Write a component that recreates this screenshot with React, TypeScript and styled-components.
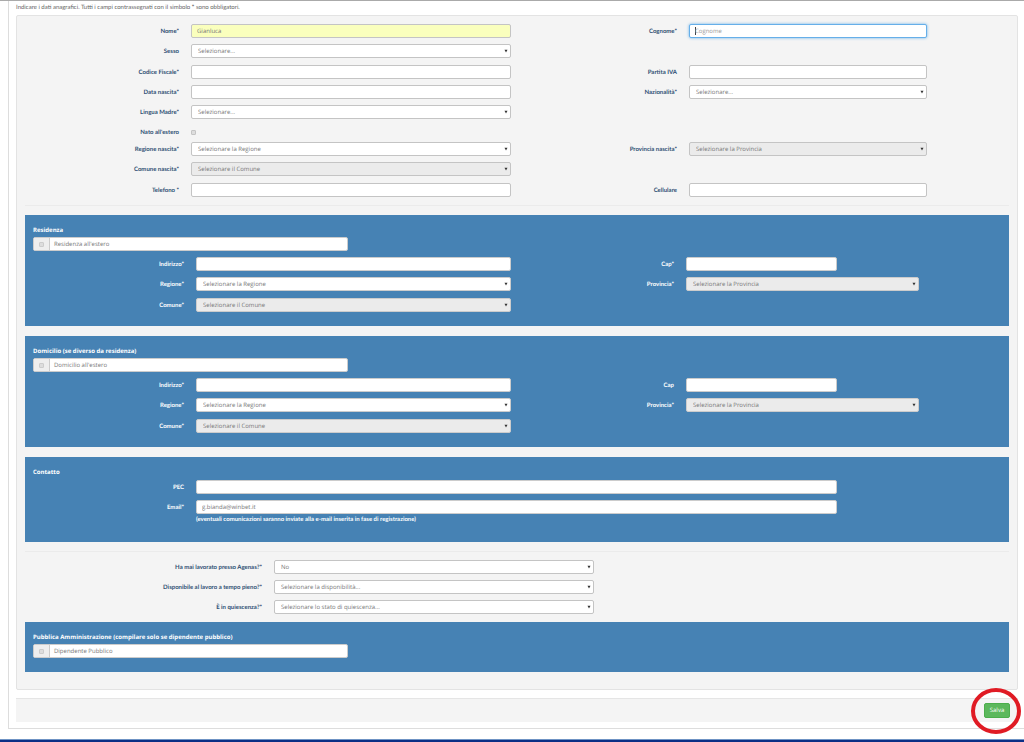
import React from "react";
import styled, { createGlobalStyle, css } from "styled-components";

const GlobalStyle = createGlobalStyle`
  *, *::before, *::after { box-sizing: border-box; }
  body {
    margin: 0;
    background: #fff;
    color: #777;
    font-family: "Open Sans", "Liberation Sans", sans-serif;
    font-size: 6px;
    line-height: 14px;
    text-rendering: geometricPrecision;
  }
  input, select, button { font: inherit; margin: 0; text-rendering: inherit; }
`;

const Page = styled.div`
  border-top: 1px solid #aaa;
`;

const Frame = styled.main`
  margin-left: 8px;
  padding: 0 6px 6px 7px;
  border-left: 1px solid #ddd;
  border-bottom: 1px solid #ddd;
`;

const Intro = styled.p`
  margin: 0;
  font-family: Lato, "Open Sans", sans-serif;
  line-height: 14px;
  color: #666;
`;

const Panel = styled.div`
  padding: 8px 8px 17px;
  border: 1px solid #e3e3e3;
  border-radius: 2px;
  background: #f4f4f4;
`;

const Divider = styled.hr<{ $above: number; $below: number }>`
  height: 1px;
  margin: ${(p) => p.$above}px 0 ${(p) => p.$below}px;
  border: 0;
  background: #ebebeb;
`;

const Rows = styled.div<{ $top?: number }>`
  display: flex;
  flex-direction: column;
  gap: 6px;
  margin-top: ${(p) => p.$top ?? 0}px;
`;

const Row = styled.div`
  display: grid;
  column-gap: 12px;
  align-items: center;
  grid-template-columns: 154fr 320fr 154fr 238fr 70fr;
`;

const CheckRow = styled(Row)`
  height: 11px;
`;

const SectionRow = styled(Row)`
  grid-template-columns: 151fr 315fr 151fr 151fr 70fr 70fr;
`;

const WorkRow = styled(Row)`
  grid-template-columns: 237fr 320fr 403fr;
`;

const Label = styled.label`
  min-width: 0;
  padding-top: 2px;
  text-align: right;
  white-space: nowrap;
  font-family: Lato, "Open Sans", sans-serif;
  font-weight: 700;
  line-height: 12px;
  color: #2f4f73;
`;

const control = css`
  display: block;
  width: 100%;
  min-width: 0;
  height: 14px;
  border: 1px solid #c4c4c4;
  border-radius: 2px;
  background: #fff;
  color: #777;
  line-height: 12px;
  outline: 0;
`;

const TextInput = styled.input<{ $filled?: boolean; $span?: number }>`
  ${control}
  padding: 0 5px;
  grid-column: span ${(p) => p.$span ?? 1};
  ${(p) => p.$filled && css`background: #faffbd;`}
  &::placeholder { color: #999; opacity: 1; }
  &:focus {
    border-color: #66afe9;
    box-shadow: 0 0 3px #66afe9;
  }
  &:focus:placeholder-shown {
    background: linear-gradient(#444, #444) 5px 2px / 1px 8px no-repeat #fff;
  }
`;

const SelectBox = styled.div<{ $span?: number }>`
  position: relative;
  min-width: 0;
  grid-column: span ${(p) => p.$span ?? 1};
`;

const NativeSelect = styled.select`
  ${control}
  appearance: none;
  padding: 0 10px 0 6px;
  &:disabled { background: #ebebeb; opacity: 1; }
`;

const Arrow = styled.svg`
  position: absolute;
  top: 5px;
  right: 3px;
  width: 4px;
  height: 4px;
  pointer-events: none;
`;

const Check = styled.input`
  appearance: none;
  display: block;
  width: 5px;
  height: 5px;
  border: 1px solid #c4c4c4;
  border-radius: 1px;
  background: #ddd;
  &:checked { background: #4682b4; }
`;

const Section = styled.section`
  padding: 8px 8px 14px;
  background: #4682b4;
  & + & { margin-top: 10px; }
  ${Label} { color: #fff; }
  input, select { border-color: #ccc; }
`;

const SectionTitle = styled.h2`
  margin: 0;
  font-size: 6px;
  line-height: 14px;
  font-weight: 700;
  color: #fff;
`;

const CheckGroup = styled.div`
  display: flex;
  width: 32.5%;
  height: 14px;
  border: 1px solid #ccc;
  border-radius: 2px;
  background: #fff;
`;

const CheckAddon = styled.span`
  display: flex;
  align-items: center;
  justify-content: center;
  width: 16px;
  border-right: 1px solid #ccc;
  background: #eee;
`;

const CheckText = styled.label`
  flex: 1;
  padding-left: 4px;
  line-height: 12px;
`;

const Note = styled.p`
  grid-column: 2 / span 3;
  margin: 0 0 2px;
  font-family: Lato, "Open Sans", sans-serif;
  line-height: 12px;
  font-weight: 700;
  color: #fff;
`;

const SpacedSection = styled(Section)`
  margin-top: 8px;
`;

const Footer = styled.footer`
  display: flex;
  justify-content: flex-end;
  align-items: flex-start;
  height: 24px;
  margin-top: 8px;
  padding: 4px 8px 0;
  border-top: 1px solid #e5e5e5;
  background: #f4f4f4;
`;

const SaveWrap = styled.div`
  position: relative;
`;

const SaveButton = styled.button`
  display: block;
  width: 26px;
  height: 15px;
  padding: 0;
  border: 1px solid #4cae4c;
  border-radius: 2px;
  background: #5cb85c;
  color: #fff;
  line-height: 13px;
`;

const Ring = styled.svg`
  position: absolute;
  top: -16px;
  left: -14px;
  width: 52px;
  height: 48px;
  pointer-events: none;
`;

const BottomBand = styled.div`
  height: 3px;
  margin-top: 10px;
  border-top: 1px solid #6f93c4;
  background: #0b2f86;
`;

type SelectProps = { id: string; text: string; disabled?: boolean; span?: number };

function Select({ id, text, disabled, span }: SelectProps) {
  return (
    <SelectBox $span={span}>
      <NativeSelect id={id} disabled={disabled}>
        <option>{text}</option>
      </NativeSelect>
      <Arrow viewBox="0 0 4 4" aria-hidden="true">
        <path d="M0.5 0.7h3L2 3.4z" fill="#333" />
      </Arrow>
    </SelectBox>
  );
}

function CheckLine({ id, text }: { id: string; text: string }) {
  return (
    <CheckGroup>
      <CheckAddon>
        <Check type="checkbox" id={id} />
      </CheckAddon>
      <CheckText htmlFor={id}>{text}</CheckText>
    </CheckGroup>
  );
}

type AddressProps = { prefix: string; title: string; abroad: string; cap: string };

function AddressSection({ prefix, title, abroad, cap }: AddressProps) {
  return (
    <Section>
      <SectionTitle>{title}</SectionTitle>
      <CheckLine id={`${prefix}-estero`} text={abroad} />
      <Rows $top={6}>
        <SectionRow>
          <Label htmlFor={`${prefix}-indirizzo`}>Indirizzo*</Label>
          <TextInput id={`${prefix}-indirizzo`} />
          <Label htmlFor={`${prefix}-cap`}>{cap}</Label>
          <TextInput id={`${prefix}-cap`} />
        </SectionRow>
        <SectionRow>
          <Label htmlFor={`${prefix}-regione`}>Regione*</Label>
          <Select id={`${prefix}-regione`} text="Selezionare la Regione" />
          <Label htmlFor={`${prefix}-provincia`}>Provincia*</Label>
          <Select id={`${prefix}-provincia`} text="Selezionare la Provincia" disabled span={2} />
        </SectionRow>
      </Rows>
      <Rows $top={7}>
        <SectionRow>
          <Label htmlFor={`${prefix}-comune`}>Comune*</Label>
          <Select id={`${prefix}-comune`} text="Selezionare il Comune" disabled />
        </SectionRow>
      </Rows>
    </Section>
  );
}

export default function App() {
  return (
    <Page>
      <GlobalStyle />
      <Frame>
        <Intro>
          Indicare i dati anagrafici. Tutti i campi contrassegnati con il simbolo <b>*</b> sono obbligatori.
        </Intro>
        <Panel>
          <Rows>
            <Row>
              <Label htmlFor="nome">Nome*</Label>
              <TextInput id="nome" defaultValue="Gianluca" $filled />
              <Label htmlFor="cognome">Cognome*</Label>
              <TextInput id="cognome" placeholder="Cognome" autoFocus />
            </Row>
            <Row>
              <Label htmlFor="sesso">Sesso</Label>
              <Select id="sesso" text="Selezionare..." />
            </Row>
          </Rows>
          <Rows $top={7}>
            <Row>
              <Label htmlFor="codice-fiscale">Codice Fiscale*</Label>
              <TextInput id="codice-fiscale" />
              <Label htmlFor="partita-iva">Partita IVA</Label>
              <TextInput id="partita-iva" />
            </Row>
            <Row>
              <Label htmlFor="data-nascita">Data nascita*</Label>
              <TextInput id="data-nascita" />
              <Label htmlFor="nazionalita">Nazionalità*</Label>
              <Select id="nazionalita" text="Selezionare..." />
            </Row>
            <Row>
              <Label htmlFor="lingua">Lingua Madre*</Label>
              <Select id="lingua" text="Selezionare..." />
            </Row>
            <CheckRow>
              <Label htmlFor="nato-estero">Nato all'estero</Label>
              <Check type="checkbox" id="nato-estero" />
            </CheckRow>
            <Row>
              <Label htmlFor="regione-nascita">Regione nascita*</Label>
              <Select id="regione-nascita" text="Selezionare la Regione" />
              <Label htmlFor="provincia-nascita">Provincia nascita*</Label>
              <Select id="provincia-nascita" text="Selezionare la Provincia" disabled />
            </Row>
            <Row>
              <Label htmlFor="comune-nascita">Comune nascita*</Label>
              <Select id="comune-nascita" text="Selezionare il Comune" disabled />
            </Row>
          </Rows>
          <Rows $top={7}>
            <Row>
              <Label htmlFor="telefono">Telefono *</Label>
              <TextInput id="telefono" type="tel" />
              <Label htmlFor="cellulare">Cellulare</Label>
              <TextInput id="cellulare" type="tel" />
            </Row>
          </Rows>
          <Divider $above={8} $below={9} />
          <AddressSection prefix="residenza" title="Residenza" abroad="Residenza all'estero" cap="Cap*" />
          <AddressSection
            prefix="domicilio"
            title="Domicilio (se diverso da residenza)"
            abroad="Domicilio all'estero"
            cap="Cap"
          />
          <Section>
            <SectionTitle>Contatto</SectionTitle>
            <Rows $top={1}>
              <SectionRow>
                <Label htmlFor="pec">PEC</Label>
                <TextInput id="pec" $span={3} />
              </SectionRow>
              <SectionRow>
                <Label htmlFor="email">Email*</Label>
                <TextInput id="email" type="email" defaultValue="g.bianda@winbet.it" $span={3} />
              </SectionRow>
            </Rows>
            <SectionRow>
              <Note>(eventuali comunicazioni saranno inviate alla e-mail inserita in fase di registrazione)</Note>
            </SectionRow>
          </Section>
          <Divider $above={9} $below={8} />
          <Rows>
            <WorkRow>
              <Label htmlFor="agenas">Ha mai lavorato presso Agenas?*</Label>
              <Select id="agenas" text="No" />
            </WorkRow>
            <WorkRow>
              <Label htmlFor="tempo-pieno">Disponibile al lavoro a tempo pieno?*</Label>
              <Select id="tempo-pieno" text="Selezionare la disponibilità..." />
            </WorkRow>
            <WorkRow>
              <Label htmlFor="quiescenza">È in quiescenza?*</Label>
              <Select id="quiescenza" text="Selezionare lo stato di quiescenza..." />
            </WorkRow>
          </Rows>
          <SpacedSection>
            <SectionTitle>Pubblica Amministrazione (compilare solo se dipendente pubblico)</SectionTitle>
            <CheckLine id="dipendente-pubblico" text="Dipendente Pubblico" />
          </SpacedSection>
        </Panel>
        <Footer>
          <SaveWrap>
            <SaveButton type="button">Salva</SaveButton>
            <Ring viewBox="0 0 52 48" aria-hidden="true">
              <ellipse cx="26" cy="24" rx="23" ry="21" fill="none" stroke="#e01b24" strokeWidth="4" />
            </Ring>
          </SaveWrap>
        </Footer>
      </Frame>
      <BottomBand />
    </Page>
  );
}
